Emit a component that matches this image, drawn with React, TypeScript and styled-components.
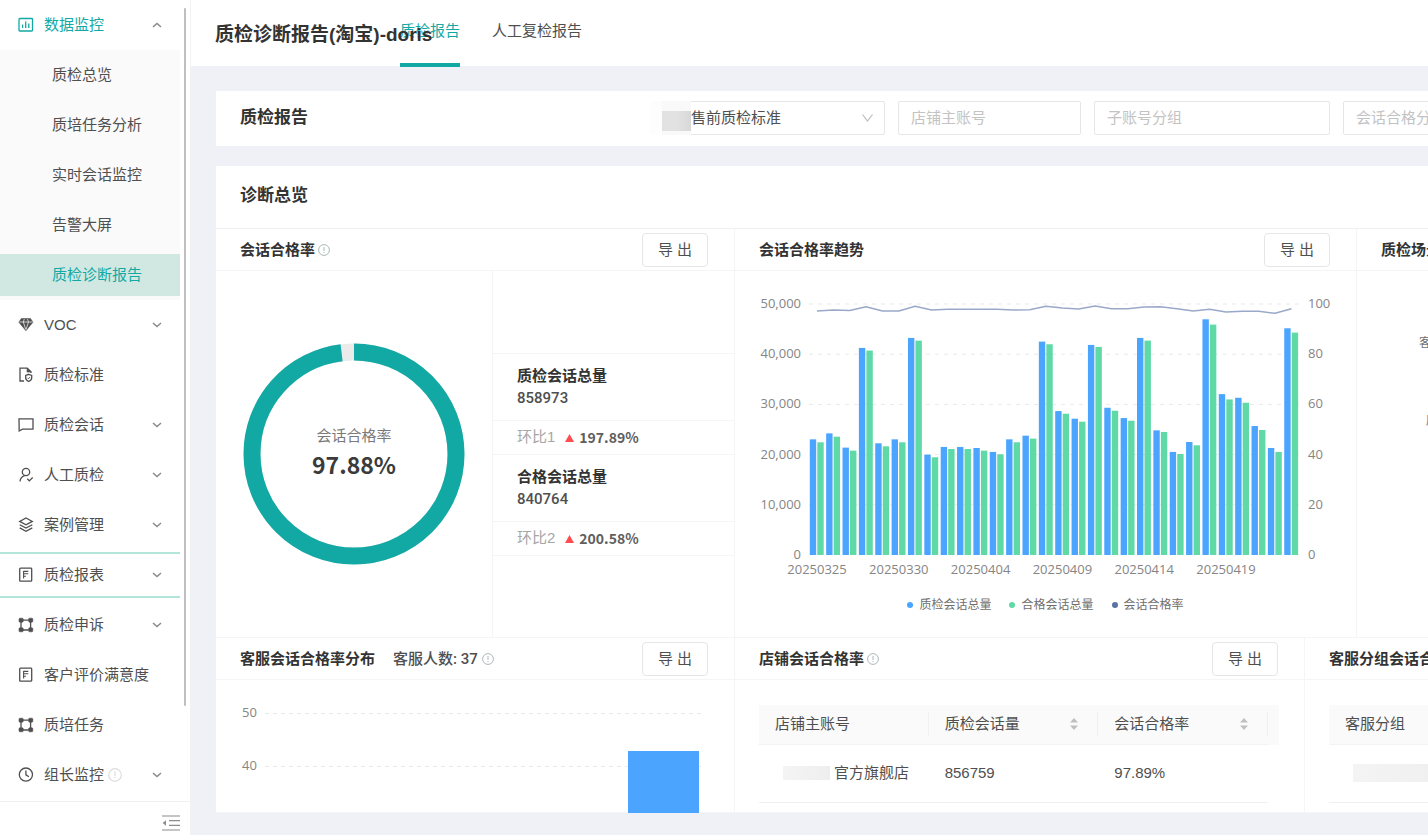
import React from "react";
import styled, { createGlobalStyle, css } from "styled-components";

const TEAL = "#12a9a4";
const TEXT = "#4f4f4f";
const HEADING = "#333333";
const LINE = "#f4f5f7";
const BLUE = "#4ba5ff";
const GREEN = "#5fd9a6";
const AXIS_FONT = '"Open Sans", "Noto Sans CJK SC", sans-serif';

const GlobalStyle = createGlobalStyle`
  *, *::before, *::after { box-sizing: border-box; }
  html, body, #root { height: 100%; margin: 0; }
  body {
    overflow: hidden;
    background: #eff1f6;
    color: ${TEXT};
    font: 15px/22px "Liberation Sans", "Noto Sans CJK SC", sans-serif;
  }
  h1, h2, h3, ul, dl, dd, p { margin: 0; padding: 0; }
  ul { list-style: none; }
  button, input, select { font: inherit; color: inherit; }
`;

const Shell = styled.div`
  display: flex;
  height: 100vh;
`;

/* ---------- sidebar ---------- */

const Sidebar = styled.aside`
  flex: 0 0 191px;
  display: flex;
  flex-direction: column;
  background: #fff;
  border-right: 1px solid #f1f2f4;
`;

const MenuArea = styled.div`
  flex: 1;
  min-height: 0;
  display: flex;
  overflow: hidden;
`;

const Menu = styled.nav`
  flex: 0 0 180px;
  display: flex;
  flex-direction: column;
`;

const Track = styled.div`
  flex: 1;
  padding: 8px 0 0 4px;
`;

const Thumb = styled.div`
  width: 2px;
  height: 88%;
  border-radius: 2px;
  background: #bfbfbf;
`;

const menuRow = css`
  display: flex;
  align-items: center;
  width: 100%;
  border: 0;
  background: none;
  text-align: left;
  text-decoration: none;
  white-space: nowrap;
  cursor: pointer;
`;

const MenuItem = styled.button<{ $active?: boolean; $framed?: boolean }>`
  ${menuRow}
  flex: none;
  height: ${(p) => (p.$framed ? 46 : 42)}px;
  margin: ${(p) => (p.$framed ? "2px" : "4px")} 0;
  padding: 0 18px;
  color: ${(p) => (p.$active ? TEAL : TEXT)};
  border: solid #b3e5da;
  border-width: ${(p) => (p.$framed ? "2px 0" : "0")};
`;

const MenuIcon = styled.span`
  display: flex;
  width: 26px;
  color: inherit;
`;

const MenuLabel = styled.span`
  flex: 1;
  display: flex;
  align-items: center;
  gap: 4px;
`;

const Submenu = styled.ul`
  flex: none;
  background: #fafafa;
`;

const SubItem = styled.a<{ $active?: boolean }>`
  ${menuRow}
  height: 42px;
  padding-left: 52px;
  color: ${(p) => (p.$active ? TEAL : TEXT)};
  background: ${(p) => (p.$active ? "#d1e8e2" : "transparent")};
`;

const SubRow = styled.li`
  padding: 4px 0;
`;

const SidebarFooter = styled.div`
  flex: 0 0 34px;
  display: flex;
  justify-content: flex-end;
  align-items: center;
  padding: 8px 10px 0 0;
  border-top: 1px solid #f0f0f0;
`;

const IconButton = styled.button`
  display: flex;
  padding: 0;
  border: 0;
  background: none;
  color: #8c8c8c;
`;

/* ---------- page ---------- */

const Main = styled.main`
  flex: 1;
  min-width: 0;
  display: flex;
  flex-direction: column;
  overflow: hidden;
`;

const PageHeader = styled.header`
  flex: none;
  display: flex;
  height: 66px;
  padding-left: 24px;
  background: #fff;
`;

const PageTitle = styled.h1`
  flex: 0 0 185px;
  min-width: 0;
  z-index: 1;
  padding-top: 4px;
  font-size: 19px;
  line-height: 62px;
  font-weight: 700;
  color: ${HEADING};
  white-space: nowrap;
`;

const Tabs = styled.nav`
  display: flex;
  gap: 32px;
`;

const Tab = styled.a<{ $active?: boolean }>`
  height: 67px;
  line-height: 62px;
  text-decoration: none;
  white-space: nowrap;
  color: ${(p) => (p.$active ? TEAL : TEXT)};
  border-bottom: 4px solid ${(p) => (p.$active ? TEAL : "transparent")};
`;

const Content = styled.div`
  flex: 1;
  min-height: 0;
  display: flex;
  flex-direction: column;
  gap: 20px;
  padding: 25px 0 22px 25px;
`;

const Card = styled.section<{ $fill?: boolean }>`
  flex: ${(p) => (p.$fill ? "1 1 0" : "0 0 auto")};
  min-height: 0;
  overflow: hidden;
  background: #fff;
`;

const CardTitle = styled.h2`
  font-size: 17px;
  line-height: 24px;
  font-weight: 700;
  color: ${HEADING};
`;

const FilterBar = styled.form`
  display: flex;
  align-items: center;
  height: 55px;
  padding: 0 0 2px 24px;
`;

const FilterTitle = styled.div`
  flex: 0 0 410px;
`;

const Filters = styled.div`
  flex: none;
  display: flex;
  gap: 13px;
`;

const SelectBox = styled.label`
  position: relative;
  display: flex;
  width: 235px;
  color: #bdbdbd;
`;

const Select = styled.select`
  appearance: none;
  width: 100%;
  height: 34px;
  padding: 0 12px 0 40px;
  border: 1px solid #e6e6e6;
  border-radius: 2px;
  background: #fff;
  color: ${TEXT};
`;

const SelectArrow = styled.span`
  position: absolute;
  right: 11px;
  top: 12px;
  display: flex;
`;

const SelectMask = styled.span`
  position: absolute;
  left: 0;
  top: 0;
  width: 41px;
  height: 34px;
  padding: 10px 0 4px 12px;
  background: linear-gradient(90deg, #fdfdfd 30%, #f9f9f9 30%);
  &::after {
    content: "";
    display: block;
    height: 20px;
    background: linear-gradient(90deg, #e2e2e2 50%, #d8d8d8);
  }
`;

const TextInput = styled.input<{ $wide?: boolean }>`
  width: ${(p) => (p.$wide ? 236 : 183)}px;
  height: 34px;
  padding: 0 12px;
  border: 1px solid #e6e6e6;
  border-radius: 2px;
  background: #fff;
  &::placeholder { color: #c3c3c3; opacity: 1; }
`;

const OverviewHead = styled.div`
  padding: 18px 24px 20px;
  border-bottom: 1px solid #eff0f2;
`;

const PanelRow = styled.div<{ $second?: boolean }>`
  display: grid;
  grid-template-columns: 519px ${(p) => (p.$second ? 570 : 622)}px 520px;
  border-bottom: 1px solid ${LINE};
`;

const Panel = styled.section`
  display: flex;
  flex-direction: column;
  min-width: 0;
  border-right: 1px solid ${LINE};
`;

const PanelHead = styled.div`
  display: flex;
  align-items: center;
  gap: 18px;
  height: 42px;
  padding: 0 26px 0 24px;
  border-bottom: 1px solid ${LINE};
`;

const PanelTitle = styled.h3`
  display: flex;
  align-items: center;
  gap: 3px;
  font-size: 15px;
  line-height: 22px;
  font-weight: 700;
  color: ${HEADING};
  white-space: nowrap;
`;

const AgentCount = styled.p`
  display: flex;
  align-items: center;
  gap: 4px;
  font-family: Roboto, "Noto Sans CJK SC", sans-serif;
  font-weight: 500;
`;

const ExportButton = styled.button`
  width: 66px;
  height: 34px;
  margin-left: auto;
  padding: 0;
  border: 1px solid #e6e6e6;
  border-radius: 4px;
  background: #fff;
`;

const RateBody = styled.div`
  display: grid;
  grid-template-columns: 277px 1fr;
  height: 366px;
`;

const DonutCell = styled.div`
  display: flex;
  align-items: center;
  justify-content: center;
  border-right: 1px solid ${LINE};
`;

const Stats = styled.dl`
  display: flex;
  flex-direction: column;
  justify-content: center;
`;

const Stat = styled.div`
  padding: 10px 24px;
  line-height: 23px;
  border-top: 1px solid ${LINE};
  dt { font-weight: 700; color: ${HEADING}; }
  dd { font-family: Roboto, sans-serif; font-weight: 500; }
`;

const Compare = styled.div`
  display: flex;
  align-items: center;
  height: 34px;
  padding: 0 24px;
  border-top: 1px solid ${LINE};
  &:last-child { border-bottom: 1px solid ${LINE}; height: 35px; }
  dt { color: #a6a6a6; }
  dd {
    display: flex;
    align-items: center;
    gap: 5px;
    margin-left: 10px;
    font-family: "Noto Sans CJK SC", sans-serif;
    font-size: 14px;
    font-weight: 700;
    color: #5e5e5e;
  }
`;

const TrendBody = styled.div`
  display: flex;
  flex-direction: column;
  gap: 13px;
  padding: 20px 24px 0;
`;

const Legend = styled.ul`
  display: flex;
  justify-content: center;
  gap: 18px;
  font-family: ${AXIS_FONT};
  font-size: 12px;
  line-height: 20px;
  color: #6f6f6f;
`;

const LegendItem = styled.li<{ $color: string }>`
  display: flex;
  align-items: center;
  gap: 6px;
  &::before {
    content: "";
    width: 6px;
    height: 6px;
    border-radius: 50%;
    background: ${(p) => p.$color};
  }
`;

const ChartSvg = styled.svg`
  display: block;
  overflow: visible;
  font-family: ${AXIS_FONT};
  font-size: 13px;
  fill: #858585;
`;

const SceneLabels = styled.ul`
  display: flex;
  flex-direction: column;
  align-items: flex-start;
  gap: 58px;
  padding: 62px 0 0 62px;
  font-size: 12px;
  line-height: 20px;
  color: #6f6f6f;
`;

const DistBody = styled.div`
  padding: 0 24px;
`;

const TableBody = styled.div`
  padding: 25px 25px 0 24px;
`;

const TableFrame = styled.div`
  padding-right: 11px;
  background: linear-gradient(#fafafa 40px, transparent 40px);
`;

const Table = styled.table`
  width: 100%;
  table-layout: fixed;
  border-collapse: separate;
  border-spacing: 0;
  th, td { padding: 0 16px; text-align: left; font-weight: 400; }
  th { height: 40px; padding-bottom: 2px; border-bottom: 1px solid #f3f3f3; }
  td { height: 58px; padding-bottom: 2px; border-bottom: 1px solid #f0f0f0; }
`;

const HeadCell = styled.div`
  display: flex;
  align-items: center;
  justify-content: space-between;
  height: 24px;
  margin-right: -16px;
  padding-right: 19px;
  border-right: 1px solid #f0f0f0;
`;

const StoreCell = styled.div`
  display: flex;
  align-items: center;
  white-space: nowrap;
`;

const Mask = styled.span<{ $long?: boolean }>`
  flex: none;
  width: ${(p) => (p.$long ? 110 : 47)}px;
  height: ${(p) => (p.$long ? 18 : 14)}px;
  margin: 0 4px 0 8px;
  background: linear-gradient(90deg, #f4f4f4, #eeeeee);
`;

/* ---------- icons ---------- */

type IconName =
  | "chart" | "gem" | "standard" | "chat" | "person" | "layers" | "report" | "nodes" | "clock";

const iconShapes: Record<IconName, React.ReactNode> = {
  chart: (
    <>
      <rect x="1" y="1.5" width="13.5" height="12.5" rx="0.8" />
      <path d="M4.6 11V7.5M7.7 11V4.5M10.8 11V6.5" />
    </>
  ),
  gem: (
    <>
      <path d="M3.3 1.5h9.2L15 5.2 7.9 13.8.8 5.2z" fill="currentColor" strokeWidth="0.5" />
      <path d="M1.5 5h13M5.3 5l2.5 7.5M10.5 5L8 12.5M5.3 5l1-3M10.5 5l-1-3" stroke="#fff" strokeWidth="0.7" />
    </>
  ),
  standard: (
    <>
      <path d="M6 14H2V1.2h7.2l3.8 3.6V6" />
      <path d="M9 1.5v3.6h4z" fill="currentColor" strokeWidth="0.6" />
      <path d="M10.7 7.3l3 1.1v2.6c0 1.7-1.2 2.7-3 3.5-1.8-.8-3-1.8-3-3.5V8.4z" />
      <path d="M9.4 10.8l1 1 1.7-1.8" strokeWidth="0.9" />
    </>
  ),
  chat: <path d="M1 1.8h14v10.4H4.5L1.2 14z" />,
  person: (
    <>
      <circle cx="8" cy="5" r="3.7" />
      <path d="M2 14.5c.2-3 1.8-5 4.6-5.9M9.3 11.8l2 2.1 3.4-3.4" />
    </>
  ),
  layers: (
    <>
      <path d="M8 1l6.3 3.4L8 7.8 1.7 4.4z" />
      <path d="M1.7 7.7L8 11.1l6.3-3.4M1.7 10.9L8 14.3l6.3-3.4" />
    </>
  ),
  report: (
    <>
      <rect x="1.7" y="1.2" width="12" height="13" rx="0.8" />
      <path d="M5.3 4.4h5M5.3 6.8h5M5.3 9.200h2.600M5.600 4v7.400" strokeWidth="1.1" />
    </>
  ),
  nodes: (
    <>
      <path d="M3 5v6.5M12.6 5v6.5M5 3.2h5.6M5 13h5.6" />
      <g fill="currentColor" strokeWidth="0.6">
        <rect x="1" y="1.2" width="4.2" height="4" rx="1" />
        <rect x="10.6" y="1.2" width="4.2" height="4" rx="1" />
        <rect x="1" y="10.8" width="4.2" height="4" rx="1" />
        <rect x="10.6" y="10.8" width="4.2" height="4" rx="1" />
      </g>
    </>
  ),
  clock: (
    <>
      <circle cx="7.9" cy="7.6" r="6.6" />
      <path d="M7.9 3.6v4.2l3 2" />
    </>
  ),
};

const Icon = ({ name }: { name: IconName }) => (
  <svg width="16" height="16" viewBox="0 0 16 16" fill="none" stroke="currentColor" strokeWidth="1.3" aria-hidden>
    {iconShapes[name]}
  </svg>
);

const Chevron = ({ up }: { up?: boolean }) => (
  <svg width="10" height="8" viewBox="0 0 10 8" fill="none" stroke="#8a8a8a" strokeWidth="1.5" aria-hidden>
    <path d={up ? "M1 6l4-3.6L9 6" : "M1 2l4 3.6L9 2"} />
  </svg>
);

const Info = ({ size = 12, color = "#a9b9b7" }: { size?: number; color?: string }) => (
  <svg width={size} height={size} viewBox="0 0 12 12" fill="none" stroke={color} aria-hidden>
    <circle cx="6" cy="6" r="5.4" />
    <path d="M6 3v4M6 8v1" />
  </svg>
);

const Sorter = () => (
  <svg width="8" height="14" viewBox="0 0 8 14" fill="#bfbfbf" aria-hidden>
    <path d="M4 1l4 4.6H0zM4 13L0 8.4h8z" />
  </svg>
);

const Up = () => (
  <svg width="9" height="9" viewBox="0 0 9 9" fill="#ff4d4f" aria-hidden>
    <path d="M4.5 1L9 9H0z" />
  </svg>
);

/* ---------- data ---------- */

const submenu = ["质检总览", "质培任务分析", "实时会话监控", "告警大屏", "质检诊断报告"];

const menu: { label: string; icon: IconName; open?: boolean; framed?: boolean; info?: boolean }[] = [
  { label: "VOC", icon: "gem", open: true },
  { label: "质检标准", icon: "standard" },
  { label: "质检会话", icon: "chat", open: true },
  { label: "人工质检", icon: "person", open: true },
  { label: "案例管理", icon: "layers", open: true },
  { label: "质检报表", icon: "report", open: true, framed: true },
  { label: "质检申诉", icon: "nodes", open: true },
  { label: "客户评价满意度", icon: "report" },
  { label: "质培任务", icon: "nodes" },
  { label: "组长监控", icon: "clock", open: true, info: true },
];

const checked = [
  23040, 24230, 21390, 41250, 22250, 23040, 43240, 20000, 21520, 21520, 21320, 20530, 23040, 23770, 42510,
  28670, 27150, 41850, 29330, 27280, 43240, 24830, 20530, 22510, 46950, 32050, 31320, 25690, 21320, 45160,
];
const passed = [
  22450, 23570, 20790, 40720, 21650, 22450, 42710, 19470, 21120, 21120, 20790, 20060, 22450, 23180, 41980,
  28140, 26550, 41450, 28740, 26750, 42710, 24500, 20130, 21850, 45890, 30990, 30330, 24900, 20530, 44300,
];
const rate = [
  97.2, 97.6, 97.4, 98.9, 97.2, 97.2, 99.1, 97.6, 97.9, 97.9, 97.9, 97.9, 97.6, 97.7, 99.1,
  98.4, 98.0, 99.2, 98.1, 98.1, 98.8, 98.9, 98.1, 97.2, 97.9, 96.8, 97.1, 97.1, 96.3, 98.1,
];
const dates = ["20250325", "20250330", "20250404", "20250409", "20250414", "20250419"];

/* ---------- charts ---------- */

const Donut = () => {
  const r = 102;
  const length = 2 * Math.PI * r;
  return (
    <svg width="222" height="222" viewBox="0 0 222 222" role="img" aria-label="会话合格率 97.88%">
      <circle cx="111" cy="111" r={r} fill="none" stroke="#ebebeb" strokeWidth="17" />
      <circle
        cx="111" cy="111" r={r} fill="none" stroke={TEAL} strokeWidth="17"
        strokeDasharray={`${length * 0.9788} ${length}`} transform="rotate(-90 111 111)"
      />
      <text x="111" y="98" textAnchor="middle" fontSize="15" fill="#7a7a7a">会话合格率</text>
      <text x="111" y="131" textAnchor="middle" fontSize="23" fontWeight="700" fill="#3b3b3b" fontFamily="Noto Sans CJK SC">97.88%</text>
    </svg>
  );
};

const TrendChart = () => {
  const top = 13;
  const base = 264;
  const step = 16.36;
  const x = (i: number) => 58 + i * step;
  const y = (share: number) => base - share * (base - top);
  return (
    <ChartSvg width="572" height="291" viewBox="0 0 572 291">
      {[0, 1, 2, 3, 4, 5].map((n) => (
        <g key={n}>
          {n > 0 && <path d={`M50 ${y(n / 5)}H541`} stroke="#e9e9e9" strokeDasharray="4 5" />}
          <text x="42" y={y(n / 5) + 4} textAnchor="end">{(n * 10000).toLocaleString("en-US")}</text>
          <text x="549" y={y(n / 5) + 4}>{n * 20}</text>
        </g>
      ))}
      {checked.map((v, i) => (
        <g key={i}>
          <rect x={x(i) - 7.2} y={y(v / 50000)} width="6.4" height={base - y(v / 50000)} fill={BLUE} />
          <rect x={x(i) + 0.3} y={y(passed[i] / 50000)} width="6.4" height={base - y(passed[i] / 50000)} fill={GREEN} />
        </g>
      ))}
      <polyline
        points={rate.map((v, i) => `${x(i)},${y(v / 100)}`).join(" ")}
        fill="none" stroke="#9aa9c9" strokeWidth="1.5" strokeLinejoin="round"
      />
      {dates.map((d, i) => (
        <text key={d} x={x(i * 5)} y="283" textAnchor="middle">{d}</text>
      ))}
    </ChartSvg>
  );
};

const DistributionChart = () => (
  <ChartSvg width="466" height="132" viewBox="0 0 466 132">
    <path d="M25 33.500H465M25 86.500H465" stroke="#e9e9e9" strokeDasharray="4 4" />
    <text x="2" y="37">50</text>
    <text x="2" y="90">40</text>
    <rect x="388" y="71" width="71" height="62" fill={BLUE} />
  </ChartSvg>
);

/* ---------- app ---------- */

const Export = () => <ExportButton type="button">导 出</ExportButton>;

export default function App() {
  return (
    <Shell>
      <GlobalStyle />
      <Sidebar>
        <MenuArea>
          <Menu>
            <MenuItem $active>
              <MenuIcon><Icon name="chart" /></MenuIcon>
              <MenuLabel>数据监控</MenuLabel>
              <Chevron up />
            </MenuItem>
            <Submenu>
              {submenu.map((label, i) => (
                <SubRow key={label}>
                  <SubItem href="#" $active={i === 4}>{label}</SubItem>
                </SubRow>
              ))}
            </Submenu>
            {menu.map((m) => (
              <MenuItem key={m.label} $framed={m.framed}>
                <MenuIcon><Icon name={m.icon} /></MenuIcon>
                <MenuLabel>
                  {m.label}
                  {m.info && <Info size={14} color="#dcdcdc" />}
                </MenuLabel>
                {m.open && <Chevron />}
              </MenuItem>
            ))}
          </Menu>
          <Track><Thumb /></Track>
        </MenuArea>
        <SidebarFooter>
          <IconButton type="button" aria-label="收起菜单">
            <svg width="18" height="16" viewBox="0 0 18 16" fill="none" stroke="currentColor" strokeWidth="1.2">
              <path d="M0 1h18M7 5.700h11M7 10.300h11M0 15h18" />
              <path d="M4 5.200v5.600L.6 8z" fill="currentColor" stroke="none" />
            </svg>
          </IconButton>
        </SidebarFooter>
      </Sidebar>

      <Main>
        <PageHeader>
          <PageTitle>质检诊断报告(淘宝)-doris</PageTitle>
          <Tabs>
            <Tab href="#" $active>质检报告</Tab>
            <Tab href="#">人工复检报告</Tab>
          </Tabs>
        </PageHeader>

        <Content>
          <Card>
            <FilterBar>
              <FilterTitle><CardTitle>质检报告</CardTitle></FilterTitle>
              <Filters>
                <SelectBox>
                  <Select aria-label="质检标准">
                    <option>售前质检标准</option>
                  </Select>
                  <SelectMask />
                  <SelectArrow>
                    <svg width="13" height="10" viewBox="0 0 13 10" fill="none" stroke="currentColor" strokeWidth="1.2">
                      <path d="M1.500 1.500l5 6.500 5-6.500" />
                    </svg>
                  </SelectArrow>
                </SelectBox>
                <TextInput placeholder="店铺主账号" aria-label="店铺主账号" />
                <TextInput $wide placeholder="子账号分组" aria-label="子账号分组" />
                <TextInput placeholder="会话合格分" aria-label="会话合格分" />
              </Filters>
            </FilterBar>
          </Card>

          <Card $fill>
            <OverviewHead><CardTitle>诊断总览</CardTitle></OverviewHead>
            <PanelRow>
              <Panel>
                <PanelHead>
                  <PanelTitle>会话合格率<Info /></PanelTitle>
                  <Export />
                </PanelHead>
                <RateBody>
                  <DonutCell><Donut /></DonutCell>
                  <Stats>
                    <Stat><dt>质检会话总量</dt><dd>858973</dd></Stat>
                    <Compare><dt>环比1</dt><dd><Up />197.89%</dd></Compare>
                    <Stat><dt>合格会话总量</dt><dd>840764</dd></Stat>
                    <Compare><dt>环比2</dt><dd><Up />200.58%</dd></Compare>
                  </Stats>
                </RateBody>
              </Panel>
              <Panel>
                <PanelHead>
                  <PanelTitle>会话合格率趋势</PanelTitle>
                  <Export />
                </PanelHead>
                <TrendBody>
                  <TrendChart />
                  <Legend>
                    <LegendItem $color={BLUE}>质检会话总量</LegendItem>
                    <LegendItem $color={GREEN}>合格会话总量</LegendItem>
                    <LegendItem $color="#5b73a3">会话合格率</LegendItem>
                  </Legend>
                </TrendBody>
              </Panel>
              <Panel>
                <PanelHead><PanelTitle>质检场景</PanelTitle></PanelHead>
                <SceneLabels><li>客</li><li>&nbsp;&nbsp;质</li></SceneLabels>
              </Panel>
            </PanelRow>
            <PanelRow $second>
              <Panel>
                <PanelHead>
                  <PanelTitle>客服会话合格率分布</PanelTitle>
                  <AgentCount>客服人数: 37<Info /></AgentCount>
                  <Export />
                </PanelHead>
                <DistBody><DistributionChart /></DistBody>
              </Panel>
              <Panel>
                <PanelHead>
                  <PanelTitle>店铺会话合格率<Info /></PanelTitle>
                  <Export />
                </PanelHead>
                <TableBody>
                  <TableFrame>
                    <Table>
                      <thead>
                        <tr>
                          <th scope="col"><HeadCell>店铺主账号</HeadCell></th>
                          <th scope="col"><HeadCell>质检会话量<Sorter /></HeadCell></th>
                          <th scope="col"><HeadCell>会话合格率<Sorter /></HeadCell></th>
                        </tr>
                      </thead>
                      <tbody>
                        <tr>
                          <td><StoreCell><Mask />官方旗舰店</StoreCell></td>
                          <td>856759</td>
                          <td>97.89%</td>
                        </tr>
                      </tbody>
                    </Table>
                  </TableFrame>
                </TableBody>
              </Panel>
              <Panel>
                <PanelHead><PanelTitle>客服分组会话合格率</PanelTitle></PanelHead>
                <TableBody>
                  <TableFrame>
                    <Table>
                      <thead>
                        <tr><th scope="col">客服分组</th></tr>
                      </thead>
                      <tbody>
                        <tr><td><StoreCell><Mask $long /></StoreCell></td></tr>
                      </tbody>
                    </Table>
                  </TableFrame>
                </TableBody>
              </Panel>
            </PanelRow>
          </Card>
        </Content>
      </Main>
    </Shell>
  );
}
